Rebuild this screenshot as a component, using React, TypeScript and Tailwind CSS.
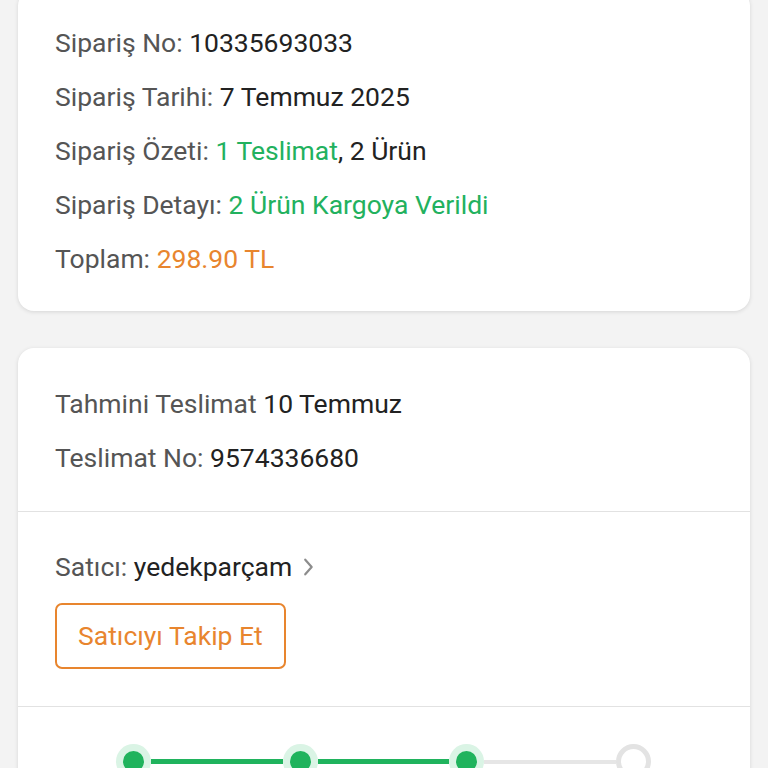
import React from "react";

const font = { fontFamily: "Roboto, 'Noto Sans', sans-serif" };

function Row({ children }: { children: React.ReactNode }) {
  return <div className="text-[26.5px] leading-[30px] font-normal text-[#555555] whitespace-nowrap">{children}</div>;
}

function Done() {
  return (
    <div className="w-[35px] h-[35px] rounded-full bg-[#daf4e5] flex items-center justify-center shrink-0">
      <div className="w-[21px] h-[21px] rounded-full bg-[#20b35d]" />
    </div>
  );
}

export default function App() {
  return (
    <div className="min-h-[768px] h-[768px] overflow-hidden bg-[#f3f3f3] px-[18px]" style={font}>
      <div className="-mt-[10px] bg-white rounded-[16px] shadow-[0_1px_4px_rgba(0,0,0,0.12)] pl-[37px] pr-[37px] pt-[38px] pb-[37px] flex flex-col gap-[24px]">
        <Row>
          Sipariş No: <span className="text-[#222]">10335693033</span>
        </Row>
        <Row>
          Sipariş Tarihi: <span className="text-[#222]">7 Temmuz 2025</span>
        </Row>
        <Row>
          Sipariş Özeti: <span className="text-[#22b15e]">1 Teslimat</span>
          <span className="text-[#222]">, 2 Ürün</span>
        </Row>
        <Row>
          Sipariş Detayı: <span className="text-[#22b15e]">2 Ürün Kargoya Verildi</span>
        </Row>
        <Row>
          Toplam: <span className="text-[#e8852e]">298.90 TL</span>
        </Row>
      </div>

      <div className="mt-[37px] bg-white rounded-[16px] shadow-[0_1px_4px_rgba(0,0,0,0.12)]">
        <div className="pl-[37px] pt-[41px] pb-[38px] flex flex-col gap-[24px]">
          <Row>
            Tahmini Teslimat <span className="text-[#222]">10 Temmuz</span>
          </Row>
          <Row>
            Teslimat No: <span className="text-[#222]">9574336680</span>
          </Row>
        </div>
        <div className="h-px bg-[#e2e2e2]" />
        <div className="pl-[37px] pt-[40px] pb-[37px]">
          <div className="flex items-center">
            <Row>
              Satıcı: <span className="text-[#222]">yedekparçam</span>
            </Row>
            <svg width="22" height="22" viewBox="0 0 24 24" className="ml-[5px]" fill="none" stroke="#8c8c8c" strokeWidth="2.4" strokeLinecap="round" strokeLinejoin="round">
              <path d="M9 4l7 8-7 8" />
            </svg>
          </div>
          <div className="mt-[21px] inline-flex items-center h-[66px] px-[21px] border-2 border-[#e8852e] rounded-[7px] text-[26.5px] font-normal text-[#e8852e] whitespace-nowrap">
            Satıcıyı Takip Et
          </div>
        </div>
        <div className="h-px bg-[#e2e2e2]" />
        <div className="pl-[98px] pr-[99px] pt-[37px] pb-[40px] flex items-center">
          <Done />
          <div className="flex-1 h-[5px] bg-[#20b35d]" />
          <Done />
          <div className="flex-1 h-[5px] bg-[#20b35d]" />
          <Done />
          <div className="flex-1 h-[4px] bg-[#e6e6e6]" />
          <div className="w-[35px] h-[35px] rounded-full border-[5px] border-[#e3e3e3] bg-white shrink-0" />
        </div>
      </div>
    </div>
  );
}
